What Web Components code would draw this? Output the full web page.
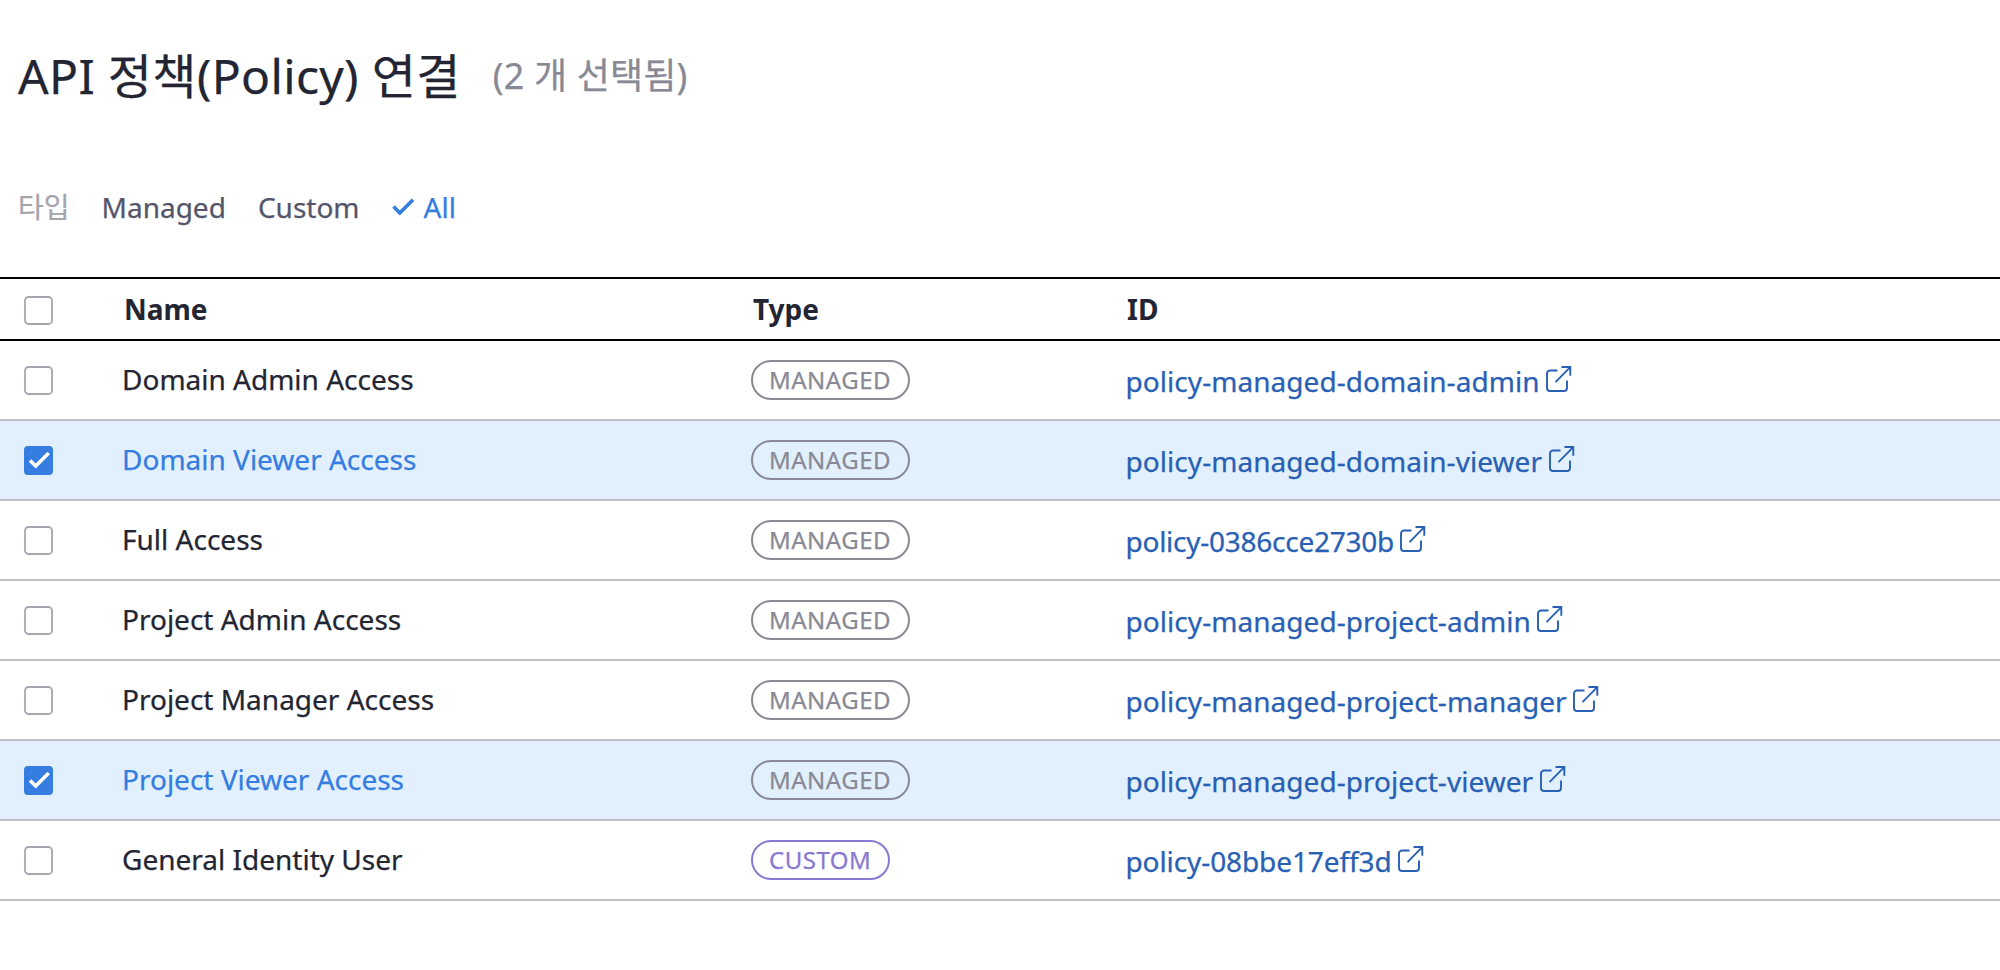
<!DOCTYPE html>
<html lang="ko">
<head>
<meta charset="utf-8">
<title>API 정책(Policy) 연결</title>
<style>
html,body{margin:0;background:#fff}
body{font-family:"Noto Sans","Noto Sans CJK KR",sans-serif;font-size:28px;color:#232533;height:970px;overflow:hidden;-webkit-text-stroke:.25px}
</style>
</head>
<body>
<policy-page></policy-page>
<script>
const define = (name, html, init) => {
  const template = document.createElement('template');
  template.innerHTML = html;
  customElements.define(name, class extends HTMLElement {
    constructor() {
      super();
      this.attachShadow({ mode: 'open' }).append(template.content.cloneNode(true));
      if (init) init(this);
    }
  });
};

define('check-box', `
<style>
:host{display:block;width:29px;height:29px}
svg{display:block}
.on{display:none}
:host([checked]) .on{display:block}
:host([checked]) .off{display:none}
</style>
<svg class="off" width="29" height="29" viewBox="0 0 29 29"><rect x="1" y="1" width="27" height="27" rx="3.5" fill="#fff" stroke="#a7a6ae" stroke-width="1.8"/></svg>
<svg class="on" width="29" height="29" viewBox="0 0 29 29"><rect width="29" height="29" rx="4" fill="#357de1"/><path d="M6 14.4l5.7 5.7L24.7 6.9" fill="none" stroke="#fff" stroke-width="3.5"/></svg>`);

define('type-badge', `
<style>
:host{display:inline-flex;box-sizing:border-box;height:40px;align-items:center;padding:0 16.5px 0 16px;border:2px solid #898995;border-radius:20px;color:#898995;font-size:24px;line-height:36px;letter-spacing:.5px;white-space:nowrap}
:host([kind=custom]){color:#8979d3;border-color:#8979d3}
</style><slot></slot>`);

define('policy-link', `
<style>
:host{display:flex;align-items:center;color:#2860b4;white-space:nowrap;letter-spacing:.05px}
svg{display:block;margin:-4px 0 0 4.5px;flex:none}
</style>
<slot></slot>
<svg width="28" height="28" viewBox="0 0 28 28" fill="none" stroke="currentColor" stroke-width="1.9"><path d="M13.5 5.5H6a3 3 0 0 0-3 3V23a3 3 0 0 0 3 3h14a3 3 0 0 0 3-3v-7.5M11.5 17.2L26 2.4M17.5 2H26.3v8.8"/></svg>`);

define('filter-item', `
<style>
:host{display:flex;align-items:center;color:#54556a;line-height:40px}
:host([label]){color:#a5a4ac}
:host([active]){color:#357de1}
svg{display:none;margin:0 9px 0 -1px}
:host([active]) svg{display:block}
</style>
<svg width="24" height="24" viewBox="0 0 24 24" fill="none" stroke="currentColor" stroke-width="3.6"><path d="M2.5 11.5l6.3 6.5L22 4.8"/></svg><slot></slot>`);

define('table-row', `
<style>
:host{display:grid;grid-template-columns:98.5px 629px 374.5px 1fr;box-sizing:border-box;height:80px;padding-left:23.5px;align-items:center;border-bottom:2px solid #bfbec5;line-height:38px;white-space:nowrap}
:host([selected]){background:#e2f0fe}
:host([selected]) slot[name=name]{color:#357de1}
:host([head]){height:64px;border-top:2px solid #000;border-bottom-color:#000;font-weight:700;grid-template-columns:100.5px 629px 374px 1fr;-webkit-text-stroke:0}
:host([head]) check-box{margin-top:2px}
.name{padding-bottom:2px}
.type{display:flex}
.id{padding-top:2px}
:host([head]) .id,:host([head]) .name{padding:0}
</style>
<check-box></check-box>
<div class="name"><slot name="name"></slot></div>
<div class="type"><slot name="type"></slot></div>
<div class="id"><slot name="id"></slot></div>`, host => {
  if (host.hasAttribute('selected')) host.shadowRoot.querySelector('check-box').setAttribute('checked', '');
});

define('page-heading', `
<style>
:host{display:flex;align-items:baseline;height:64px;padding-left:18px;font-size:48px;line-height:64px;letter-spacing:.35px;white-space:nowrap}
.count{margin-left:32px;font-size:36px;color:#898995;letter-spacing:.15px;position:relative;top:-5px}
</style>
<span><slot></slot></span><span class="count"><slot name="count"></slot></span>`);

const policies = [
  ['Domain Admin Access', 'managed', 'policy-managed-domain-admin'],
  ['Domain Viewer Access', 'managed', 'policy-managed-domain-viewer', true],
  ['Full Access', 'managed', 'policy-0386cce2730b', false, '-.26px'],
  ['Project Admin Access', 'managed', 'policy-managed-project-admin'],
  ['Project Manager Access', 'managed', 'policy-managed-project-manager'],
  ['Project Viewer Access', 'managed', 'policy-managed-project-viewer', true],
  ['General Identity User', 'custom', 'policy-08bbe17eff3d', false, '-.1px'],
];

define('policy-page', `
<style>
:host{display:block;padding-top:44px}
nav{display:flex;align-items:flex-start;box-sizing:border-box;gap:32px;padding:79px 0 0 18px;height:169px}
</style>
<page-heading>API 정책(Policy) 연결<span slot="count">(2 개 선택됨)</span></page-heading>
<nav><filter-item label>타입</filter-item><filter-item>Managed</filter-item><filter-item>Custom</filter-item><filter-item active>All</filter-item></nav>
<table-row head><span slot="name">Name</span><span slot="type">Type</span><span slot="id">ID</span></table-row>
${policies.map(([name, kind, id, selected, tracking]) => `<table-row${selected ? ' selected' : ''}><span slot="name">${name}</span><type-badge slot="type" kind="${kind}">${kind.toUpperCase()}</type-badge><policy-link slot="id"${tracking ? ` style="letter-spacing:${tracking}"` : ''}>${id}</policy-link></table-row>`).join('')}`);
</script>
</body>
</html>
